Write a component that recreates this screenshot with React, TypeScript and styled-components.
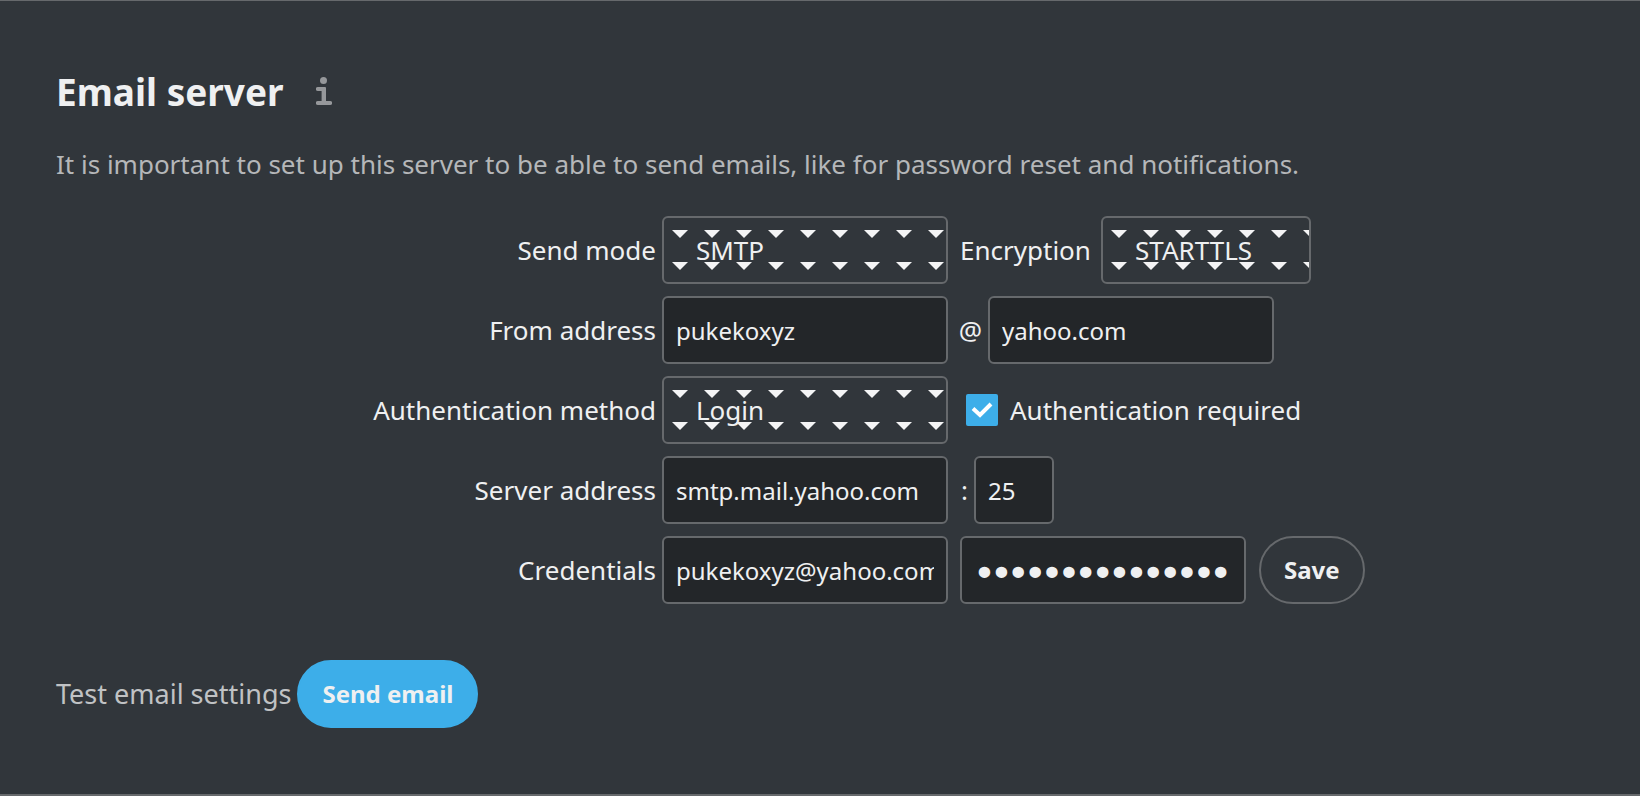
import React from 'react';
import styled, { createGlobalStyle } from 'styled-components';

const arrow =
  "url(\"data:image/svg+xml,%3Csvg xmlns='http://www.w3.org/2000/svg' width='32' height='32'%3E%3Cpath d='M8 12h16l-8 8z' fill='%23f4f4f5'/%3E%3C/svg%3E\")";

const GlobalStyle = createGlobalStyle`
  *, *::before, *::after { box-sizing: border-box; }
  body {
    margin: 0;
    background: #31363b;
    color: #eff0f1;
    font-family: "Noto Sans", "Open Sans", sans-serif;
    font-size: 26px;
    line-height: 40px;
  }
  input, select, button { font: inherit; color: inherit; margin: 0; }
`;

const Section = styled.section`
  min-height: 100vh;
  padding: 58px 56px 64px;
  border-top: 1px solid #66696c;
  border-bottom: 2px solid #66696c;
`;

const Header = styled.header`
  display: flex;
  align-items: center;
  gap: 32px;
  height: 64px;
`;

const Title = styled.h2`
  margin: 0;
  padding-top: 2px;
  font-size: 37px;
  line-height: 64px;
  font-weight: 700;
`;

const InfoLink = styled.a`
  display: flex;
  color: #96989b;
`;

const Hint = styled.p`
  margin: 21px 0 32px;
  color: #b5b7b9;
`;

const Form = styled.form`
  display: flex;
  flex-direction: column;
  gap: 12px;
`;

const Row = styled.div`
  display: flex;
  align-items: center;
  white-space: nowrap;
`;

const RowLabel = styled.label`
  width: 600px;
  margin-right: 6px;
  text-align: right;
`;

const InlineLabel = styled.label`
  min-width: 135px;
  margin: 0 6px 0 12px;
`;

const Separator = styled.label<{ $width: number }>`
  width: ${(p) => p.$width}px;
  padding-right: 6px;
  text-align: right;
`;

const Field = styled.input<{ $width?: number }>`
  width: ${(p) => p.$width ?? 286}px;
  height: 68px;
  padding: 0 12px;
  border: 2px solid #66696c;
  border-radius: 6px;
  background: #232629;
  font-size: 24px;
  outline: none;
`;

const PasswordField = styled(Field)`
  margin-left: 12px;
  padding: 0 14px;
  font-family: Inter, "Noto Sans", sans-serif;
  font-size: 30px;
  -webkit-text-stroke: 2px currentColor;
`;

const Select = styled.select<{ $width?: number }>`
  appearance: none;
  width: ${(p) => p.$width ?? 286}px;
  height: 68px;
  padding: 0 32px;
  border: 2px solid #66696c;
  border-radius: 6px;
  background: #31363b ${arrow} repeat 0 0;
  font-size: 26px;
  outline: none;
`;

const Checkbox = styled.input`
  appearance: none;
  width: 32px;
  height: 32px;
  border-radius: 2px;
  background: #3daee9;
`;

const CheckWrap = styled.span`
  display: grid;
  margin-left: 18px;
  > * { grid-area: 1 / 1; }
  > svg { pointer-events: none; }
`;

const Button = styled.button<{ $primary?: boolean }>`
  height: 68px;
  padding: 0 23px;
  border: 2px solid ${(p) => (p.$primary ? '#3daee9' : '#66696c')};
  border-radius: 34px;
  background: ${(p) => (p.$primary ? '#3daee9' : 'transparent')};
  font-size: 24px;
  font-weight: 700;
  cursor: pointer;
`;

const SaveButton = styled(Button)`
  margin-left: 13px;
`;

const TestRow = styled.div`
  display: flex;
  align-items: center;
  gap: 6px;
  margin-top: 56px;
`;

const TestText = styled.span`
  color: #c0c2c4;
  font-size: 27px;
`;

export default function App() {
  return (
    <Section>
      <GlobalStyle />
      <Header>
        <Title>Email server</Title>
        <InfoLink href="#email-docs" aria-label="Open documentation">
          <svg width="16" height="28" viewBox="0 0 16 28" fill="currentColor">
            <circle cx="7.5" cy="3.5" r="3.5" />
            <path d="M1.8 10h7.2q1 0 1 1v13h4.2a1.8 1.8 0 0 1 0 4H1.8a1.8 1.8 0 0 1 0-4H5.6V14H1.8a1.8 1.8 0 0 1 0-4z" />
          </svg>
        </InfoLink>
      </Header>
      <Hint>
        It is important to set up this server to be able to send emails, like for password reset and notifications.
      </Hint>
      <Form onSubmit={(e) => e.preventDefault()}>
        <Row>
          <RowLabel htmlFor="mode">Send mode</RowLabel>
          <Select id="mode" defaultValue="SMTP"><option>SMTP</option></Select>
          <InlineLabel htmlFor="encryption">Encryption</InlineLabel>
          <Select id="encryption" $width={210} defaultValue="STARTTLS"><option>STARTTLS</option></Select>
        </Row>
        <Row>
          <RowLabel htmlFor="from">From address</RowLabel>
          <Field id="from" defaultValue="pukekoxyz" />
          <Separator htmlFor="domain" $width={40}>@</Separator>
          <Field id="domain" defaultValue="yahoo.com" />
        </Row>
        <Row>
          <RowLabel htmlFor="method">Authentication method</RowLabel>
          <Select id="method" defaultValue="Login"><option>Login</option></Select>
          <CheckWrap>
            <Checkbox id="required" type="checkbox" defaultChecked />
            <svg width="32" height="32" viewBox="0 0 32 32" fill="none" stroke="#fff" strokeWidth="4">
              <path d="M7 14.5l7 6.5L25 10" />
            </svg>
          </CheckWrap>
          <InlineLabel htmlFor="required">Authentication required</InlineLabel>
        </Row>
        <Row>
          <RowLabel htmlFor="server">Server address</RowLabel>
          <Field id="server" defaultValue="smtp.mail.yahoo.com" />
          <Separator htmlFor="port" $width={26}>:</Separator>
          <Field id="port" $width={80} defaultValue="25" />
        </Row>
        <Row>
          <RowLabel htmlFor="user">Credentials</RowLabel>
          <Field id="user" defaultValue="pukekoxyz@yahoo.com" />
          <PasswordField type="password" aria-label="Password" defaultValue="passwordpasswor" />
          <SaveButton type="submit">Save</SaveButton>
        </Row>
      </Form>
      <TestRow>
        <TestText>Test email settings</TestText>
        <Button type="button" $primary>Send email</Button>
      </TestRow>
    </Section>
  );
}
